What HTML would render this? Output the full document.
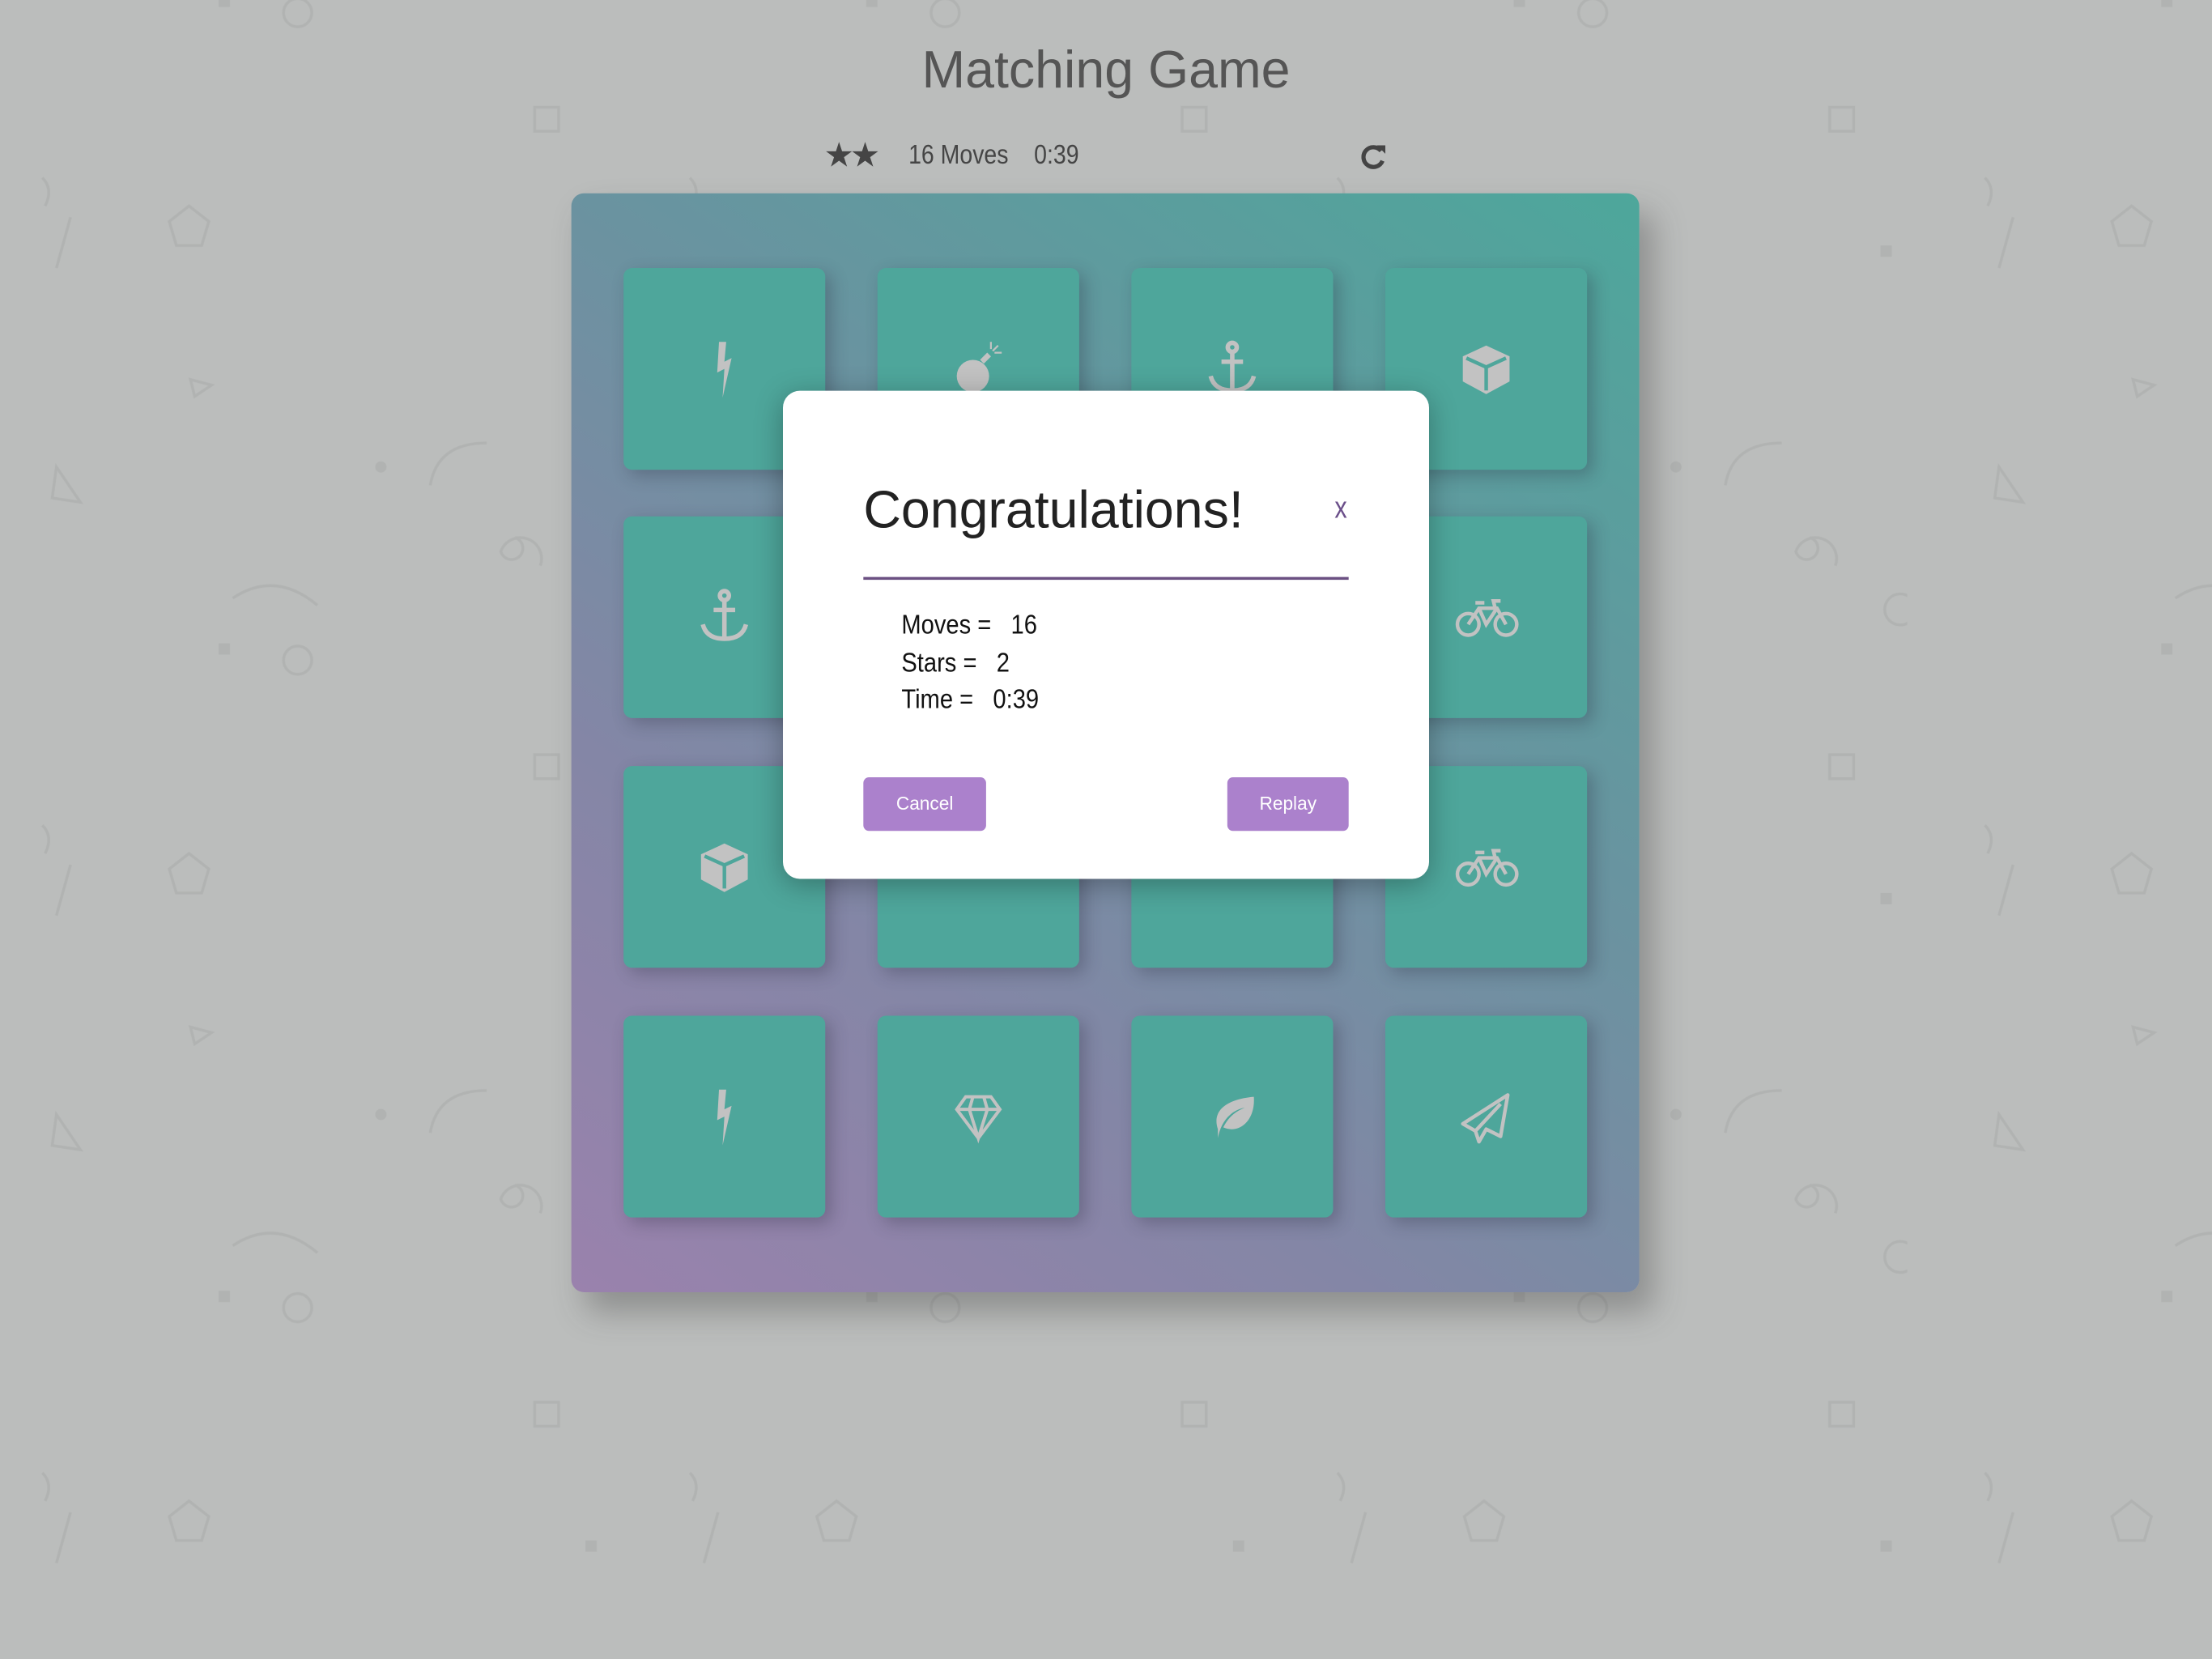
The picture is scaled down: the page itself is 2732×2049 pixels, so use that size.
<!DOCTYPE html>
<html><head><meta charset="utf-8">
<style>
html,body{margin:0;padding:0;width:2732px;height:2048px;overflow:hidden;background:#bbbdbc;}
#w{position:absolute;left:0;top:0;width:1568px;height:1176px;transform:scale(1.742347);transform-origin:0 0;font-family:"Liberation Sans",sans-serif;}
.bg{position:absolute;left:0;top:0;}
h1{position:absolute;left:0;width:1568px;top:29px;margin:0;text-align:center;font-weight:normal;font-size:37px;color:#555;}
.stats{position:absolute;top:100px;font-size:19px;color:#454545;transform:scaleX(0.86);transform-origin:0 0;white-space:nowrap;}
.deck{position:absolute;left:405px;top:137px;width:757px;height:779px;border-radius:9px;background:linear-gradient(215deg,#4da79b 0%,#6a93a0 40%,#8486a6 70%,#9a82ad 100%);box-shadow:10px 14px 22px rgba(60,60,60,0.35);}
.card{position:absolute;width:143px;height:143px;background:#4ea69b;border-radius:6px;box-shadow:4px 4px 12px rgba(40,40,60,0.3);}
.card svg{position:absolute;left:46px;top:46px;width:51px;height:51px;}
.modal{position:absolute;left:555px;top:277px;width:458px;height:346px;background:#fff;border-radius:12px;box-shadow:0 4px 20px rgba(0,0,0,0.3);}
.mt{position:absolute;left:57px;top:64px;font-size:37px;color:#222;}
.x{position:absolute;left:390px;top:70px;font-size:22px;color:#6b4f8a;transform:scaleX(0.8);}
.line{position:absolute;left:57px;top:132px;width:344px;height:2px;background:#6b5082;}
.info{position:absolute;left:84px;top:154px;font-size:19px;line-height:26.5px;color:#111;transform:scaleX(0.88);transform-origin:0 0;white-space:nowrap;}
.btn{position:absolute;top:274px;height:38px;background:#ab81cc;border-radius:4px;color:#fff;font-size:13px;text-align:center;line-height:38px;}
</style></head><body><div id="w">
<svg class="bg" width="1568" height="1176">
<defs><pattern id="p" width="459" height="459" patternUnits="userSpaceOnUse" x="-25" y="94">
<g fill="none" stroke="#b1b3b2" stroke-width="2">
<polygon points="159,52 173,63 168,80 150,80 145,63"/>
<circle cx="236" cy="374" r="10"/>
<circle cx="454" cy="338" r="11"/>
<rect x="404" y="441" width="17" height="17"/>
<path d="M75,60 L65,96"/><path d="M160,175 l15,4 l-12,8z"/>
<path d="M55,32 q8,8 2,20"/><path d="M330,250 q5,-30 40,-30"/>
<path d="M390,287 a8,8 0 1 1 -10,10 a14,14 0 1 1 28,10"/>
<path d="M145,472 l18,9"/><path d="M190,330 q30,-20 60,5"/>
<path d="M65,237 l-3,22 l20,3z"/>
</g>
<g fill="#b1b3b2"><rect x="440" y="80" width="8" height="8"/><circle cx="295" cy="237" r="4"/><rect x="180" y="362" width="8" height="8"/></g>
</pattern></defs>
<rect width="1568" height="1176" fill="url(#p)"/>
</svg>
<h1>Matching Game</h1>
<div class="stats" style="left:584px;top:96px;font-size:24px;font-family:'DejaVu Sans',sans-serif;letter-spacing:-3px;transform:none;">★★</div>
<div class="stats" style="left:644px;">16 Moves</div>
<div class="stats" style="left:733px;">0:39</div>
<svg style="position:absolute;left:965px;top:102px" width="18" height="18" viewBox="0 0 18 18"><path d="M14,5 A7,7 0 1 0 15,12" fill="none" stroke="#444" stroke-width="3"/><path d="M11,1 L17,1 L17,7z" fill="#444"/></svg>
<div class="deck"></div>
<div class="card" style="left:442px;top:190px"><svg viewBox="0 0 40 40"><path d="M17,5 L21,5 L20,16 L24,14 L19,36 L20,20 L16,22z" fill="#c2c2c2"/></svg></div>
<div class="card" style="left:622px;top:190px"><svg viewBox="0 0 40 40"><circle cx="17" cy="24" r="9" fill="#c2c2c2"/><path d="M22,16 l4,-4" stroke="#c2c2c2" stroke-width="3"/><path d="M28,10 l3,-3 M29,11 l4,0 M27,9 l0,-4" stroke="#c2c2c2" stroke-width="1"/></svg></div>
<div class="card" style="left:802px;top:190px"><svg viewBox="0 0 40 40"><g fill="none" stroke="#c2c2c2" stroke-width="2.5"><circle cx="20" cy="8" r="2.5"/><path d="M20,11 V32 M14,16 H26 M8,24 q2,8 12,8 q10,0 12,-8"/></g></svg></div>
<div class="card" style="left:982px;top:190px"><svg viewBox="0 0 40 40"><path d="M20,7 L33,13 V27 L20,34 L7,27 V13z" fill="#c2c2c2"/><path d="M9,14 L20,19 L31,14 M20,19 V32" stroke="#4ea69b" stroke-width="2" fill="none"/></svg></div>
<div class="card" style="left:442px;top:366px"><svg viewBox="0 0 40 40"><g fill="none" stroke="#c2c2c2" stroke-width="2.5"><circle cx="20" cy="8" r="2.5"/><path d="M20,11 V32 M14,16 H26 M8,24 q2,8 12,8 q10,0 12,-8"/></g></svg></div>
<div class="card" style="left:982px;top:366px"><svg viewBox="0 0 40 40"><g fill="none" stroke="#c2c2c2" stroke-width="2"><circle cx="10" cy="24" r="6"/><circle cx="31" cy="24" r="6"/><path d="M10,24 L16,15 L26,15 L31,24 M16,15 L20,24 L26,15 M14,12 H19 M25,15 L24,11 H28"/></g></svg></div>
<div class="card" style="left:442px;top:543px"><svg viewBox="0 0 40 40"><path d="M20,7 L33,13 V27 L20,34 L7,27 V13z" fill="#c2c2c2"/><path d="M9,14 L20,19 L31,14 M20,19 V32" stroke="#4ea69b" stroke-width="2" fill="none"/></svg></div>
<div class="card" style="left:622px;top:543px"></div>
<div class="card" style="left:802px;top:543px"></div>
<div class="card" style="left:982px;top:543px"><svg viewBox="0 0 40 40"><g fill="none" stroke="#c2c2c2" stroke-width="2"><circle cx="10" cy="24" r="6"/><circle cx="31" cy="24" r="6"/><path d="M10,24 L16,15 L26,15 L31,24 M16,15 L20,24 L26,15 M14,12 H19 M25,15 L24,11 H28"/></g></svg></div>
<div class="card" style="left:442px;top:720px"><svg viewBox="0 0 40 40"><path d="M17,5 L21,5 L20,16 L24,14 L19,36 L20,20 L16,22z" fill="#c2c2c2"/></svg></div>
<div class="card" style="left:622px;top:720px"><svg viewBox="0 0 40 40"><g fill="none" stroke="#c2c2c2" stroke-width="1.8"><path d="M13,9 H27 L32,16 L20,32 L8,16z M8,16 H32 M17,9 L15,16 L20,32 L25,16 L23,9"/></g></svg></div>
<div class="card" style="left:802px;top:720px"><svg viewBox="0 0 40 40"><path d="M12,27 C8,15 20,10 32,9 C33,22 24,30 15,26 C18,20 22,17 27,15 C21,16 14,21 12,32z" fill="#c2c2c2"/></svg></div>
<div class="card" style="left:982px;top:720px"><svg viewBox="0 0 40 40"><g fill="none" stroke="#c2c2c2" stroke-width="2" stroke-linejoin="round"><path d="M32,8 L7,24 L14,28 L16,34 L20,27 L28,31z M14,28 L28,13"/></g></svg></div>
<div class="modal">
<div class="mt">Congratulations!</div>
<div class="x">x</div>
<div class="line"></div>
<div class="info">Moves = &nbsp; 16<br>Stars = &nbsp; 2<br>Time = &nbsp; 0:39</div>
<div class="btn" style="left:57px;width:87px;">Cancel</div>
<div class="btn" style="left:315px;width:86px;">Replay</div>
</div>
</div></body></html>
